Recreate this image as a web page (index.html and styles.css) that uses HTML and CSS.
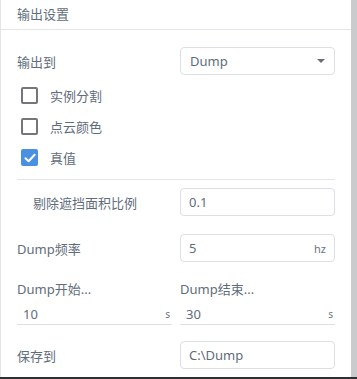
FILE: index.html
```html
<!DOCTYPE html>
<html lang="zh-CN">
<head>
    <meta charset="UTF-8">
    <meta name="viewport" content="width=device-width, initial-scale=1.0">
    <title>输出设置</title>
    <link rel="stylesheet" href="styles.css">
</head>
<body>
    <div class="frame">
        <div class="panel">
            <div class="panel-header">输出设置</div>

            <div class="panel-body">
                <div class="form-row first">
                    <span class="label">输出到</span>
                    <div class="select">
                        <span>Dump</span>
                        <span class="caret"></span>
                    </div>
                </div>

                <div class="checks">
                    <label class="check-row">
                        <span class="checkbox"></span>
                        <span class="check-text">实例分割</span>
                    </label>
                    <label class="check-row">
                        <span class="checkbox"></span>
                        <span class="check-text">点云颜色</span>
                    </label>
                    <label class="check-row">
                        <span class="checkbox checked">
                            <svg width="12" height="10" viewBox="0 0 12 10">
                                <path d="M1.5 5.2 L4.6 8.2 L10.6 1.8" fill="none" stroke="#fff" stroke-width="2" stroke-linecap="round" stroke-linejoin="round"/>
                            </svg>
                        </span>
                        <span class="check-text">真值</span>
                    </label>
                </div>

                <div class="divider"></div>

                <div class="form-row ratio">
                    <span class="label indent">剔除遮挡面积比例</span>
                    <div class="input"><span>0.1</span></div>
                </div>

                <div class="form-row freq">
                    <span class="label">Dump频率</span>
                    <div class="input"><span>5</span><span class="unit">hz</span></div>
                </div>

                <div class="pair">
                    <div class="pair-item">
                        <div class="pair-label">Dump开始...</div>
                        <div class="line-input"><span>10</span><span class="unit-s">s</span></div>
                    </div>
                    <div class="pair-item">
                        <div class="pair-label">Dump结束...</div>
                        <div class="line-input"><span>30</span><span class="unit-s">s</span></div>
                    </div>
                </div>

                <div class="form-row save">
                    <span class="label">保存到</span>
                    <div class="input"><span>C:\Dump</span></div>
                </div>
            </div>
        </div>
        <div class="scroll-strip"></div>
    </div>
    <div class="bottom-bar"></div>
</body>
</html>
```

FILE: styles.css
```css
* {
    margin: 0;
    padding: 0;
    box-sizing: border-box;
}

body {
    font-family: 'Noto Sans', 'Noto Sans CJK SC', sans-serif;
    font-size: 13px;
    color: #5f6d7b;
    background: #2f3032;
    width: 357px;
    height: 379px;
    overflow: hidden;
}

.frame {
    display: flex;
    height: 377px;
}

.panel {
    width: 351px;
    background: #fff;
    border-left: 1px solid #e3e5e8;
}

.scroll-strip {
    flex: 1;
    background: #c9cbcd;
}

.bottom-bar {
    height: 2px;
}

.panel-header {
    height: 30px;
    line-height: 28px;
    padding-left: 16px;
    border-bottom: 1px solid #e3e5e8;
}

.panel-body {
    padding: 0 16px 0 16px;
}

.form-row {
    display: flex;
    align-items: center;
    justify-content: space-between;
    height: 28px;
}

.form-row.first { margin-top: 17px; }
.form-row.ratio { margin-top: 8px; }
.form-row.freq { margin-top: 18px; }
.form-row.save { margin-top: 16px; }

.label.indent {
    padding-left: 16px;
}

.select,
.input {
    width: 155px;
    height: 28px;
    border: 1px solid #dcdfe4;
    border-radius: 4px;
    display: flex;
    align-items: center;
    justify-content: space-between;
    padding: 0 8px 0 8px;
}

.select {
    padding-left: 9px;
}

.caret {
    width: 0;
    height: 0;
    border-left: 4px solid transparent;
    border-right: 4px solid transparent;
    border-top: 4px solid #6b6f73;
    margin-right: 1px;
}

.unit {
    font-size: 11px;
    color: #6b7480;
}

.checks {
    margin-top: 5px;
}

.check-row {
    display: flex;
    align-items: center;
    height: 31px;
    padding-left: 4px;
}

.checkbox {
    width: 17px;
    height: 17px;
    border: 2px solid #747679;
    border-radius: 2px;
    display: flex;
    align-items: center;
    justify-content: center;
}

.checkbox.checked {
    background: #4a90e2;
    border-color: #4a90e2;
}

.check-text {
    margin-left: 12px;
}

.divider {
    margin-top: 6px;
    height: 1px;
    background: #e3e5e8;
}

.pair {
    display: flex;
    gap: 8px;
    margin-top: 18px;
}

.pair-item {
    flex: 1;
}

.pair-label {
    line-height: 18px;
}

.line-input {
    margin-top: 6px;
    height: 21px;
    border-bottom: 1px solid #dcdfe4;
    display: flex;
    align-items: center;
    justify-content: space-between;
    padding: 0 2px 0 6px;
}

.unit-s {
    font-size: 10px;
    color: #6b7480;
}
```
